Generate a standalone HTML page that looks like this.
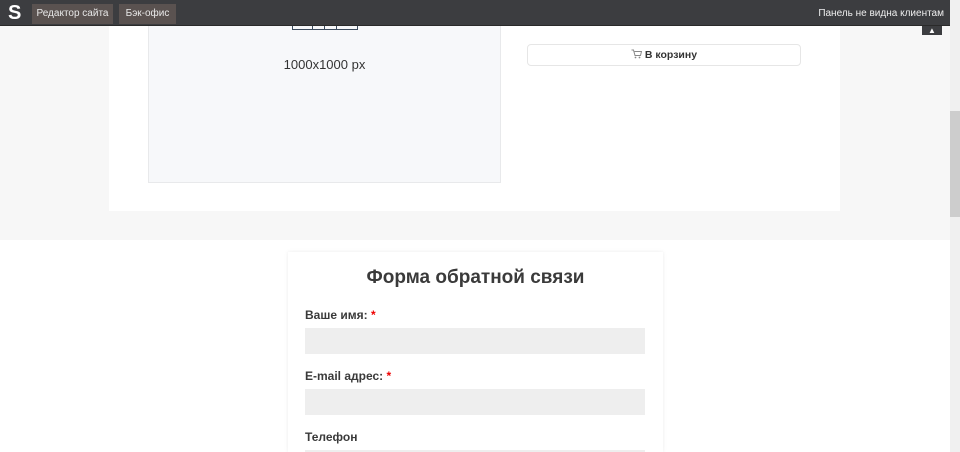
<!DOCTYPE html>
<html style="width:960px;height:452px;overflow:hidden"><head><meta charset="utf-8"><style>
*{margin:0;padding:0;box-sizing:border-box}
body{width:960px;height:452px;overflow:hidden;background:#fff;font-family:"Liberation Sans",sans-serif;position:relative}
.abs{position:absolute}
</style></head><body>
<div class="abs" style="left:0;top:0;width:950px;height:240px;background:#f7f7f7"></div>
<div class="abs" style="left:109px;top:26px;width:731px;height:185px;background:#fff"></div>
<div class="abs" style="left:148px;top:26px;width:353px;height:157px;background:#f7f8fa;border:1px solid #e8e9eb;border-top:none"></div>
<div class="abs" style="left:292px;top:26px;width:66px;height:4px;border:1px solid #3b4a5c;border-top:none"></div>
<div class="abs" style="left:312px;top:26px;width:1px;height:4px;background:#3b4a5c"></div>
<div class="abs" style="left:324px;top:26px;width:1px;height:4px;background:#3b4a5c"></div>
<div class="abs" style="left:336px;top:26px;width:1px;height:4px;background:#3b4a5c"></div>
<div class="abs" style="left:148px;top:57px;width:353px;text-align:center;font-size:13px;color:#333">1000x1000 px</div>
<div class="abs" style="left:527px;top:44px;width:274px;height:22px;border:1px solid #e6e6e6;border-radius:4px;background:#fff;text-align:center;font-size:10.5px;font-weight:bold;color:#333;line-height:20px">
<svg width="11" height="10" viewBox="0 0 11 10" style="vertical-align:-1px;margin-right:3px"><path d="M0.5 1h2l1.5 5.5h5.5l1-4h-7" fill="none" stroke="#888" stroke-width="1"/><circle cx="4.5" cy="8.5" r="0.9" fill="#888"/><circle cx="8.5" cy="8.5" r="0.9" fill="#888"/></svg>В корзину</div>
<div class="abs" style="left:0;top:0;width:950px;height:26px;background:#3c3d40;border-bottom:1px solid #2a2a2a"></div>
<div class="abs" style="left:8px;top:2px;font-size:20px;font-weight:bold;color:#fff">S</div>
<div class="abs" style="left:32px;top:4px;width:81px;height:20px;background:#5a5250;color:#e8e8e8;font-size:10px;line-height:20px;text-align:center">Редактор сайта</div>
<div class="abs" style="left:119px;top:4px;width:57px;height:20px;background:#5a5250;color:#e8e8e8;font-size:10px;line-height:20px;text-align:center">Бэк-офис</div>
<div class="abs" style="left:780px;top:8px;width:164px;text-align:right;color:#eee;font-size:10px">Панель не видна клиентам</div>
<div class="abs" style="left:922px;top:26px;width:20px;height:9px;background:#3c3d40;color:#fff;font-size:8px;text-align:center;line-height:9px">▲</div>
<div class="abs" style="left:950px;top:0;width:10px;height:452px;background:#f0f0f0"></div>
<div class="abs" style="left:950px;top:111px;width:10px;height:106px;background:#cdcdcd"></div>
<div class="abs" style="left:288px;top:252px;width:375px;height:200px;background:#fff;box-shadow:0 0 4px rgba(0,0,0,0.08)"></div>
<div class="abs" style="left:288px;top:267px;width:375px;text-align:center;font-size:19px;font-weight:bold;color:#3a3a3a">Форма обратной связи</div>
<div class="abs" style="left:305px;top:308px;font-size:12px;font-weight:bold;color:#3a3a3a">Ваше имя: <span style="color:#e00">*</span></div>
<div class="abs" style="left:305px;top:328px;width:340px;height:26px;background:#eee"></div>
<div class="abs" style="left:305px;top:369px;font-size:12px;font-weight:bold;color:#3a3a3a">E-mail адрес: <span style="color:#e00">*</span></div>
<div class="abs" style="left:305px;top:389px;width:340px;height:26px;background:#eee"></div>
<div class="abs" style="left:305px;top:430px;font-size:12px;font-weight:bold;color:#3a3a3a">Телефон</div>
<div class="abs" style="left:305px;top:450px;width:340px;height:2px;background:#eee"></div>
</body></html>
